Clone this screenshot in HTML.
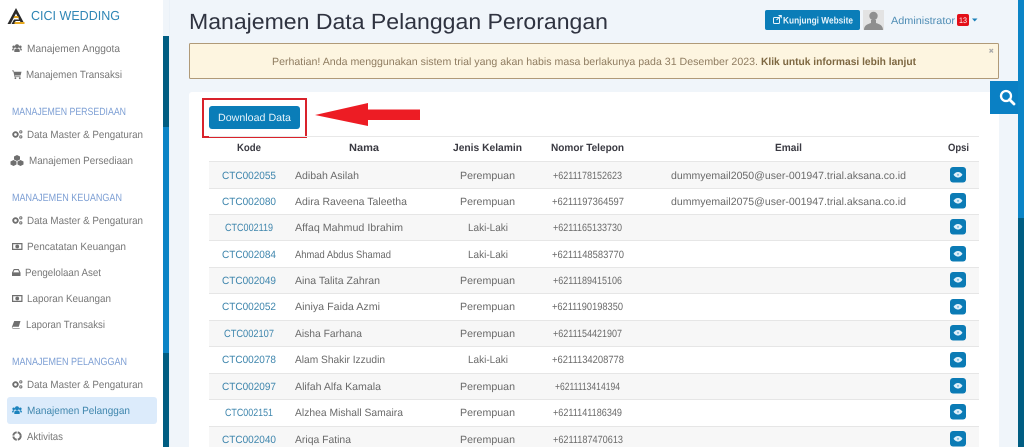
<!DOCTYPE html>
<html><head><meta charset="utf-8"><title>Manajemen Data Pelanggan Perorangan</title>
<style>
html,body{margin:0;padding:0;width:1024px;height:447px;overflow:hidden;background:#f0f5fa}
svg{display:block;position:absolute;left:0;top:0;filter:blur(.3px)}
text{font-family:"Liberation Sans",sans-serif;font-size:10.5px;fill:#6a6a6a;text-rendering:geometricPrecision}
.s{fill:#777;font-size:10.5px}
.h{fill:#7d9fd4;font-size:10.5px}
.k{fill:#3f86ad}
.b{font-weight:bold;fill:#3a3a42}
.i{fill:#6f6f6f}
</style></head><body>
<svg width="1024" height="447" viewBox="0 0 1024 447" xmlns="http://www.w3.org/2000/svg">
<defs>
<g id="users"><circle cx="5" cy="2.300" r="2"/><circle cx="1.700" cy="2.800" r="1.300"/><circle cx="8.300" cy="2.800" r="1.300"/><path d="M2.300 8V6.400C2.300 5 3.600 4.500 5 4.500S7.700 5 7.700 6.400V8Z"/><path d="M0 6.400C0 4.800 .8 4.300 1.800 4.300 2 4.300 2.200 4.300 2.400 4.500 1.900 4.900 1.600 5.600 1.600 6.400ZM10 6.400C10 4.800 9.200 4.300 8.200 4.300 8 4.300 7.800 4.300 7.600 4.500 8.100 4.900 8.400 5.600 8.400 6.400Z"/></g>
<g id="cart"><path d="M0 .5H1.800L2.100 1.800H9.500L8.600 5.500H3L3.200 6.400H8.400V7.100H2.600L1.300 1.200H0Z"/><circle cx="3.400" cy="8.200" r=".9"/><circle cx="7.800" cy="8.200" r=".9"/></g>
<g id="cogs"><circle cx="3.500" cy="4.500" r="2.300" fill="none" stroke="#6f6f6f" stroke-width="1.900"/><circle cx="8.800" cy="1.900" r="1.100" fill="none" stroke="#6f6f6f" stroke-width="1"/><circle cx="8.800" cy="6.900" r="1.100" fill="none" stroke="#6f6f6f" stroke-width="1"/></g>
<g id="money"><path fill-rule="evenodd" d="M0 0H10.500V7H0ZM1.200 1.200V5.800H9.300V1.200Z"/><circle cx="5.250" cy="3.500" r="1.900"/></g>
<g id="inbox"><path d="M1.800 0H6.700L8.500 3.600V7H0V3.600ZM2.400 1.100 1.300 3.400H7.200L6.100 1.100Z" fill-rule="evenodd"/></g>
<g id="book"><path d="M2.200 0H8.500L6.800 5.800H1.200C.4 5.800 0 6.600 .9 7H7.800L7.600 7.600H1.100C-.2 7.600-.4 5.800.3 5Z"/></g>
<g id="eye"><path d="M0 2.800C1.300 .8 2.900 0 4.500 0S7.700 .8 9 2.800C7.700 4.800 6.100 5.600 4.500 5.600S1.300 4.800 0 2.800Z" fill="#e0f0fa"/><circle cx="4.500" cy="2.800" r="1.100" fill="#7fbcdf"/></g>
</defs>

<!-- main background -->
<rect x="0" y="0" width="1024" height="447" fill="#f0f5fa"/>

<!-- sidebar -->
<rect x="0" y="0" width="163" height="447" fill="#fff"/>
<rect x="163" y="36" width="6" height="91" fill="#005d82"/>
<rect x="163" y="127" width="6" height="226" fill="#0b84c6"/>
<rect x="163" y="353" width="6" height="94" fill="#005d82"/>
<rect x="169" y="0" width="1" height="447" fill="#eaf1f8"/>

<!-- logo -->
<path d="M16 8 7.500 24H10.500L16 13.500 21.500 24H24.500Z" fill="#2a2a2a"/>
<path d="M11.500 24 14 19.500H19.500L20 21H15.500L14.500 24Z" fill="#2a2a2a"/>
<path d="M14.500 22H24.500V24H14.500Z" fill="#e6a820"/>
<path d="M13.500 18H19L18 16H14.500Z" fill="#e6a820"/>
<text x="31" y="20" style="font-size:13px;fill:#2f86b5" textLength="89" lengthAdjust="spacingAndGlyphs">CICI WEDDING</text>

<use href="#users" x="12" y="44" fill="#6f6f6f"/>
<text class="s" x="27" y="52" textLength="93" lengthAdjust="spacingAndGlyphs">Manajemen Anggota</text>
<use href="#cart" x="12" y="70" fill="#6f6f6f"/>
<text class="s" x="26" y="78" textLength="96" lengthAdjust="spacingAndGlyphs">Manajemen Transaksi</text>

<text class="h" x="12" y="115" textLength="114" lengthAdjust="spacingAndGlyphs">MANAJEMEN PERSEDIAAN</text>
<use href="#cogs" x="12" y="130"/>
<text class="s" x="27" y="138" textLength="116" lengthAdjust="spacingAndGlyphs">Data Master &amp; Pengaturan</text>
<g fill="#6f6f6f"><path d="M17 155 20 156.500V159.500L17 161 14 159.500V156.500Z"/><path d="M20.500 160 23.500 161.500V164.500L20.500 166 17.500 164.500V161.500Z"/><path d="M13.500 160 16.500 161.500V164.500L13.500 166 10.500 164.500V161.500Z"/></g>
<text class="s" x="29" y="164" textLength="104" lengthAdjust="spacingAndGlyphs">Manajemen Persediaan</text>

<text class="h" x="12" y="201" textLength="110" lengthAdjust="spacingAndGlyphs">MANAJEMEN KEUANGAN</text>
<use href="#cogs" x="12" y="216"/>
<text class="s" x="27" y="224" textLength="116" lengthAdjust="spacingAndGlyphs">Data Master &amp; Pengaturan</text>
<use href="#money" x="12" y="243" fill="#6f6f6f"/>
<text class="s" x="27" y="250" textLength="99" lengthAdjust="spacingAndGlyphs">Pencatatan Keuangan</text>
<use href="#inbox" x="12" y="269" fill="#6f6f6f"/>
<text class="s" x="25" y="276" textLength="76" lengthAdjust="spacingAndGlyphs">Pengelolaan Aset</text>
<use href="#money" x="12" y="295" fill="#6f6f6f"/>
<text class="s" x="27" y="302" textLength="84" lengthAdjust="spacingAndGlyphs">Laporan Keuangan</text>
<use href="#book" x="12" y="321" fill="#6f6f6f"/>
<text class="s" x="26" y="328" textLength="79" lengthAdjust="spacingAndGlyphs">Laporan Transaksi</text>

<text class="h" x="12" y="365" textLength="115" lengthAdjust="spacingAndGlyphs">MANAJEMEN PELANGGAN</text>
<use href="#cogs" x="12" y="380"/>
<text class="s" x="27" y="388" textLength="116" lengthAdjust="spacingAndGlyphs">Data Master &amp; Pengaturan</text>
<rect x="7" y="397" width="150" height="27" rx="3" fill="#dcebfb"/>
<use href="#users" x="12" y="406" fill="#1c83bd"/>
<text x="27" y="414" style="fill:#3f86ad" textLength="103" lengthAdjust="spacingAndGlyphs">Manajemen Pelanggan</text>
<circle cx="17" cy="436" r="3.700" fill="none" stroke="#6f6f6f" stroke-width="2" stroke-dasharray="5 1"/>
<text class="s" x="27" y="440" textLength="36" lengthAdjust="spacingAndGlyphs">Aktivitas</text>

<!-- right page scrollbar -->
<rect x="1018" y="0" width="6" height="218" fill="#0b84c6"/>
<rect x="1018" y="218" width="6" height="229" fill="#005d82"/>

<!-- title -->
<text x="189" y="29" style="font-size:22px;fill:#2f3340" textLength="419" lengthAdjust="spacingAndGlyphs">Manajemen Data Pelanggan Perorangan</text>

<!-- top right -->
<rect x="765" y="10" width="95" height="20" rx="2" fill="#0a7db8"/>
<g fill="none" stroke="#e8f4fb" stroke-width="1"><rect x="773.500" y="17.500" width="6" height="6" rx="1"/><path d="M776.500 20 781 15.800M778.500 15.500H781.300V18.300"/></g>
<text x="783" y="23.500" style="font-size:9.500px;fill:#e8f4fb;font-weight:bold" textLength="70" lengthAdjust="spacingAndGlyphs">Kunjungi Website</text>
<rect x="863" y="10" width="21" height="20" fill="#e3e3e3"/>
<circle cx="873.500" cy="16" r="4.200" fill="#8f8f8f"/>
<path d="M864 30C864 25 868 24 871 23V20H876V23C879 24 883 25 883 30Z" fill="#8f8f8f"/>
<text x="891" y="24" style="font-size:10.500px;fill:#4f8db5" textLength="64" lengthAdjust="spacingAndGlyphs">Administrator</text>
<rect x="957" y="14" width="12" height="12" rx="2" fill="#e30f18"/>
<text x="959" y="23" style="font-size:8px;fill:#fff" textLength="8" lengthAdjust="spacingAndGlyphs">13</text>
<path d="M972 18.500H977.500L974.700 21.500Z" fill="#1a7fb8"/>

<!-- alert -->
<rect x="189.500" y="43.500" width="809" height="35" rx="1" fill="#fdf5e0" stroke="#b09a78"/>
<text x="272" y="65" style="fill:#8f7c60" textLength="486" lengthAdjust="spacingAndGlyphs">Perhatian! Anda menggunakan sistem trial yang akan habis masa berlakunya pada 31 Desember 2023.</text>
<text x="761" y="65" style="fill:#7d6741;font-weight:bold" textLength="155" lengthAdjust="spacingAndGlyphs">Klik untuk informasi lebih lanjut</text>
<path d="M989.500 49 993 52.500M993 49 989.500 52.500" stroke="#aaa" stroke-width="1.300"/>

<!-- card -->
<rect x="189" y="92" width="810" height="360" rx="3" fill="#fff"/>

<!-- search -->
<rect x="990" y="81" width="28" height="33" fill="#0a80c4"/>
<circle cx="1006" cy="96" r="5" fill="none" stroke="#fff" stroke-width="2.300"/>
<path d="M1009.500 99.500 1014 104" stroke="#fff" stroke-width="2.800" stroke-linecap="round"/>

<!-- download -->
<rect x="203" y="99" width="103" height="38" fill="none" stroke="#d9222b" stroke-width="2"/>
<rect x="209" y="106" width="91" height="23" rx="3" fill="#0a7db8"/>
<text x="218" y="121" style="fill:#e8f4fb" textLength="73" lengthAdjust="spacingAndGlyphs">Download Data</text>
<path d="M315 115 368 103V109.500H420V120H368V126Z" fill="#ed1c24"/>

<!-- table -->
<rect x="209" y="136" width="770" height="1" fill="#e8e8e8"/>
<text class="b" x="237" y="151" textLength="24" lengthAdjust="spacingAndGlyphs">Kode</text>
<text class="b" x="349" y="151" textLength="30" lengthAdjust="spacingAndGlyphs">Nama</text>
<text class="b" x="453" y="151" textLength="69" lengthAdjust="spacingAndGlyphs">Jenis Kelamin</text>
<text class="b" x="551" y="151" textLength="73" lengthAdjust="spacingAndGlyphs">Nomor Telepon</text>
<text class="b" x="775" y="151" textLength="27" lengthAdjust="spacingAndGlyphs">Email</text>
<text class="b" x="948" y="151" textLength="21" lengthAdjust="spacingAndGlyphs">Opsi</text>

<g fill="#f7f7f7">
<rect x="209" y="162" width="770" height="26"/>
<rect x="209" y="214" width="770" height="27"/>
<rect x="209" y="267" width="770" height="26"/>
<rect x="209" y="320" width="770" height="26"/>
<rect x="209" y="373" width="770" height="26"/>
<rect x="209" y="426" width="770" height="21"/>
</g>
<g fill="#e6e6e6">
<rect x="209" y="161" width="770" height="1"/>
<rect x="209" y="188" width="770" height="1"/>
<rect x="209" y="214" width="770" height="1"/>
<rect x="209" y="240" width="770" height="1"/>
<rect x="209" y="267" width="770" height="1"/>
<rect x="209" y="293" width="770" height="1"/>
<rect x="209" y="320" width="770" height="1"/>
<rect x="209" y="346" width="770" height="1"/>
<rect x="209" y="373" width="770" height="1"/>
<rect x="209" y="399" width="770" height="1"/>
<rect x="209" y="426" width="770" height="1"/>
</g>

<!-- row 1 -->
<text class="k" x="222" y="179" textLength="54" lengthAdjust="spacingAndGlyphs">CTC002055</text>
<text x="295" y="179" textLength="64" lengthAdjust="spacingAndGlyphs">Adibah Asilah</text>
<text x="460" y="179" textLength="55" lengthAdjust="spacingAndGlyphs">Perempuan</text>
<text x="553" y="179" textLength="69" lengthAdjust="spacingAndGlyphs">+6211178152623</text>
<text x="671" y="179" textLength="235" lengthAdjust="spacingAndGlyphs">dummyemail2050@user-001947.trial.aksana.co.id</text>
<!-- row 2 -->
<text class="k" x="222" y="205" textLength="54" lengthAdjust="spacingAndGlyphs">CTC002080</text>
<text x="295" y="205" textLength="112" lengthAdjust="spacingAndGlyphs">Adira Raveena Taleetha</text>
<text x="460" y="205" textLength="55" lengthAdjust="spacingAndGlyphs">Perempuan</text>
<text x="552" y="205" textLength="72" lengthAdjust="spacingAndGlyphs">+6211197364597</text>
<text x="671" y="205" textLength="235" lengthAdjust="spacingAndGlyphs">dummyemail2075@user-001947.trial.aksana.co.id</text>
<!-- row 3 -->
<text class="k" x="225" y="231" textLength="48" lengthAdjust="spacingAndGlyphs">CTC002119</text>
<text x="295" y="231" textLength="108" lengthAdjust="spacingAndGlyphs">Affaq Mahmud Ibrahim</text>
<text x="468" y="231" textLength="40" lengthAdjust="spacingAndGlyphs">Laki-Laki</text>
<text x="553" y="231" textLength="69" lengthAdjust="spacingAndGlyphs">+6211165133730</text>
<!-- row 4 -->
<text class="k" x="222" y="258" textLength="54" lengthAdjust="spacingAndGlyphs">CTC002084</text>
<text x="295" y="258" textLength="96" lengthAdjust="spacingAndGlyphs">Ahmad Abdus Shamad</text>
<text x="468" y="258" textLength="40" lengthAdjust="spacingAndGlyphs">Laki-Laki</text>
<text x="552" y="258" textLength="72" lengthAdjust="spacingAndGlyphs">+6211148583770</text>
<!-- row 5 -->
<text class="k" x="222" y="284" textLength="54" lengthAdjust="spacingAndGlyphs">CTC002049</text>
<text x="295" y="284" textLength="85" lengthAdjust="spacingAndGlyphs">Aina Talita Zahran</text>
<text x="460" y="284" textLength="55" lengthAdjust="spacingAndGlyphs">Perempuan</text>
<text x="553" y="284" textLength="69" lengthAdjust="spacingAndGlyphs">+6211189415106</text>
<!-- row 6 -->
<text class="k" x="222" y="310" textLength="54" lengthAdjust="spacingAndGlyphs">CTC002052</text>
<text x="295" y="310" textLength="85" lengthAdjust="spacingAndGlyphs">Ainiya Faida Azmi</text>
<text x="460" y="310" textLength="55" lengthAdjust="spacingAndGlyphs">Perempuan</text>
<text x="552" y="310" textLength="71" lengthAdjust="spacingAndGlyphs">+6211190198350</text>
<!-- row 7 -->
<text class="k" x="224" y="337" textLength="50" lengthAdjust="spacingAndGlyphs">CTC002107</text>
<text x="295" y="337" textLength="67" lengthAdjust="spacingAndGlyphs">Aisha Farhana</text>
<text x="460" y="337" textLength="55" lengthAdjust="spacingAndGlyphs">Perempuan</text>
<text x="553" y="337" textLength="69" lengthAdjust="spacingAndGlyphs">+6211154421907</text>
<!-- row 8 -->
<text class="k" x="222" y="363" textLength="54" lengthAdjust="spacingAndGlyphs">CTC002078</text>
<text x="295" y="363" textLength="90" lengthAdjust="spacingAndGlyphs">Alam Shakir Izzudin</text>
<text x="468" y="363" textLength="40" lengthAdjust="spacingAndGlyphs">Laki-Laki</text>
<text x="552" y="363" textLength="72" lengthAdjust="spacingAndGlyphs">+6211134208778</text>
<!-- row 9 -->
<text class="k" x="222" y="390" textLength="54" lengthAdjust="spacingAndGlyphs">CTC002097</text>
<text x="295" y="390" textLength="86" lengthAdjust="spacingAndGlyphs">Alifah Alfa Kamala</text>
<text x="460" y="390" textLength="55" lengthAdjust="spacingAndGlyphs">Perempuan</text>
<text x="555" y="390" textLength="65" lengthAdjust="spacingAndGlyphs">+6211113414194</text>
<!-- row 10 -->
<text class="k" x="225" y="416" textLength="48" lengthAdjust="spacingAndGlyphs">CTC002151</text>
<text x="295" y="416" textLength="108" lengthAdjust="spacingAndGlyphs">Alzhea Mishall Samaira</text>
<text x="460" y="416" textLength="55" lengthAdjust="spacingAndGlyphs">Perempuan</text>
<text x="553" y="416" textLength="69" lengthAdjust="spacingAndGlyphs">+6211141186349</text>
<!-- row 11 -->
<text class="k" x="222" y="443" textLength="54" lengthAdjust="spacingAndGlyphs">CTC002040</text>
<text x="295" y="443" textLength="56" lengthAdjust="spacingAndGlyphs">Ariqa Fatina</text>
<text x="460" y="443" textLength="55" lengthAdjust="spacingAndGlyphs">Perempuan</text>
<text x="553" y="443" textLength="70" lengthAdjust="spacingAndGlyphs">+6211187470613</text>

<!-- eye buttons -->
<g fill="#0b7bb5">
<rect x="950" y="167" width="16" height="15.500" rx="3"/>
<rect x="950" y="193" width="16" height="15.500" rx="3"/>
<rect x="950" y="219" width="16" height="15.500" rx="3"/>
<rect x="950" y="246" width="16" height="15.500" rx="3"/>
<rect x="950" y="272" width="16" height="15.500" rx="3"/>
<rect x="950" y="299" width="16" height="15.500" rx="3"/>
<rect x="950" y="325" width="16" height="15.500" rx="3"/>
<rect x="950" y="352" width="16" height="15.500" rx="3"/>
<rect x="950" y="378" width="16" height="15.500" rx="3"/>
<rect x="950" y="404" width="16" height="15.500" rx="3"/>
<rect x="950" y="431" width="16" height="15.500" rx="3"/>
</g>
<use href="#eye" x="953.500" y="172"/>
<use href="#eye" x="953.500" y="198"/>
<use href="#eye" x="953.500" y="224"/>
<use href="#eye" x="953.500" y="251"/>
<use href="#eye" x="953.500" y="277"/>
<use href="#eye" x="953.500" y="304"/>
<use href="#eye" x="953.500" y="330"/>
<use href="#eye" x="953.500" y="357"/>
<use href="#eye" x="953.500" y="383"/>
<use href="#eye" x="953.500" y="409"/>
<use href="#eye" x="953.500" y="436"/>
</svg>
</body></html>
